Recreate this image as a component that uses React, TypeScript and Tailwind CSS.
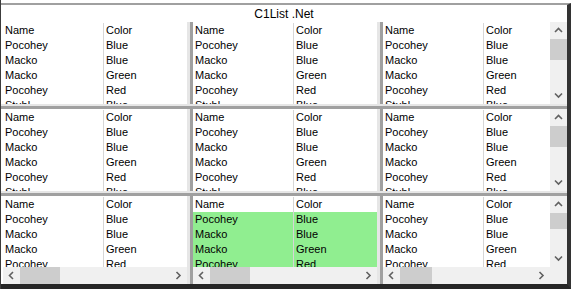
import React from "react";

const data = [
  ["Pocohey", "Blue"],
  ["Macko", "Blue"],
  ["Macko", "Green"],
  ["Pocohey", "Red"],
  ["Stuhl", "Blue"],
  ["Pocohey", "Green"],
];

function Chevron({ dir }: { dir: "up" | "down" | "left" | "right" }) {
  const pts = {
    up: "1,5 4.5,1.5 8,5",
    down: "1,1.5 4.5,5 8,1.5",
    left: "5,1 1.5,4.5 5,8",
    right: "1.5,1 5,4.5 1.5,8",
  }[dir];
  const vert = dir === "up" || dir === "down";
  return (
    <svg width={vert ? 9 : 7} height={vert ? 7 : 9} viewBox={vert ? "0 0 9 7" : "0 0 7 9"}>
      <polyline points={pts} fill="none" stroke="#606060" strokeWidth="1.6" />
    </svg>
  );
}

function VScroll({ thumb }: { thumb: string }) {
  return (
    <div className="w-[17px] bg-[#f0f0f0] flex flex-col shrink-0">
      <div className="h-[17px] flex items-center justify-center shrink-0">
        <Chevron dir="up" />
      </div>
      <div className="flex-1 min-h-0 flex flex-col">
        <div className={"w-full bg-[#cdcdcd] " + thumb} />
      </div>
      <div className="h-[17px] flex items-center justify-center shrink-0">
        <Chevron dir="down" />
      </div>
    </div>
  );
}

function HScroll({ thumb }: { thumb: string }) {
  return (
    <div className="flex-1 h-[17px] bg-[#f0f0f0] flex">
      <div className="w-[17px] flex items-center justify-center shrink-0">
        <Chevron dir="left" />
      </div>
      <div className="flex-1 min-w-0 flex">
        <div className={"h-full bg-[#cdcdcd] " + thumb} />
      </div>
      <div className="w-[17px] flex items-center justify-center shrink-0">
        <Chevron dir="right" />
      </div>
    </div>
  );
}

type PaneProps = {
  first?: boolean;
  vThumb?: string;
  hThumb?: string;
  highlight?: boolean;
};

function Pane({ first, vThumb, hThumb, highlight }: PaneProps) {
  return (
    <div className={"flex flex-col bg-white h-full overflow-hidden " + (first ? "w-[186px] pl-[2px]" : "w-[184px]")}>
      <div className="flex flex-1 min-h-0">
        <div className="flex-1 min-w-0 overflow-hidden pt-px">
          <div className="flex h-[15px] leading-[15px]">
            <div className="w-[101px] pl-[2px] border-r border-[#d6d6d6] shrink-0">Name</div>
            <div className="flex-1 pl-[2px]">Color</div>
          </div>
          {data.map(([n, c], i) => (
            <div
              key={i}
              className={"flex h-[15px] leading-[15px] " + (highlight && i < 4 ? "bg-[#90ee90]" : "")}
            >
              <div className="w-[101px] pl-[2px] border-r border-[#d6d6d6] shrink-0 whitespace-nowrap">{n}</div>
              <div className="flex-1 pl-[2px] whitespace-nowrap">{c}</div>
            </div>
          ))}
        </div>
        {vThumb && <VScroll thumb={vThumb} />}
      </div>
      {hThumb && (
        <div className="flex h-[17px] shrink-0">
          <HScroll thumb={hThumb} />
          {vThumb && <div className="w-[17px] bg-[#f0f0f0]" />}
        </div>
      )}
    </div>
  );
}

function VSplit() {
  return (
    <div className="w-[6px] h-full flex shrink-0">
      <div className="w-[3px] bg-[#e6e6e6]" />
      <div className="w-[3px] bg-[#a0a0a0]" />
    </div>
  );
}

function HSplit() {
  return (
    <div className="h-[5px] flex flex-col shrink-0">
      <div className="h-[2px] bg-[#e6e6e6]" />
      <div className="h-[3px] bg-[#a0a0a0]" />
    </div>
  );
}

export default function App() {
  return (
    <div className="w-[571px] h-[289px] bg-white flex flex-col border-l border-[#3c3c3c] overflow-hidden font-['Liberation_Sans',Arial,sans-serif] text-[11px] text-black">
      <div className="h-[3px] shrink-0" />
      <div className="flex-1 flex flex-col border-t-2 border-t-[#a0a0a0] border-r-[4px] border-r-[#333333] border-b-[5px] border-b-[#262626] min-h-0">
        {/* caption */}
        <div className="h-[17px] shrink-0 flex items-center justify-center text-[12px] leading-none">
          C1List .Net
        </div>

        {/* row 1 */}
        <div className="h-[82px] flex shrink-0">
          <Pane first />
          <VSplit />
          <Pane />
          <VSplit />
          <Pane vThumb="h-[21px]" />
        </div>
        <HSplit />

        {/* row 2 */}
        <div className="h-[82px] flex shrink-0">
          <Pane first />
          <VSplit />
          <Pane />
          <VSplit />
          <Pane vThumb="h-[21px]" />
        </div>
        <HSplit />

        {/* row 3 */}
        <div className="flex-1 flex min-h-0">
          <Pane first hThumb="w-[40px]" />
          <VSplit />
          <Pane highlight hThumb="w-[40px]" />
          <VSplit />
          <Pane vThumb="h-[16px]" hThumb="w-[32px]" />
        </div>
      </div>
    </div>
  );
}
